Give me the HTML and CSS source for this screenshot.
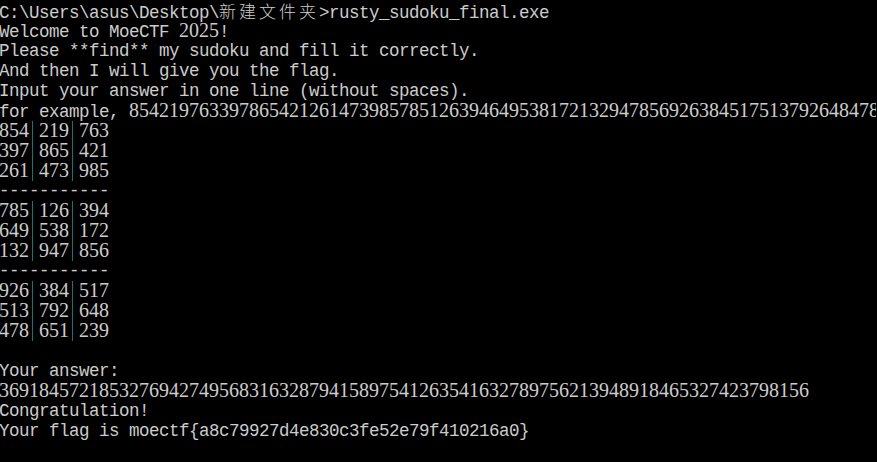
FILE: index.html
```html
<!DOCTYPE html>
<html>
<head>
<meta charset="utf-8">
<link rel="stylesheet" href="styles.css">
</head>
<body>
<div class="console">
  <div class="line">C:\Users\asus\Desktop\<span class="cjk">新建文件夹</span>&gt;rusty_sudoku_final.exe</div>
  <div class="line">Welcome to MoeCTF <span class="num">2025</span>!</div>
  <div class="line">Please **find** my sudoku and fill it correctly.</div>
  <div class="line">And then I will give you the flag.</div>
  <div class="line">Input your answer in one line (without spaces).</div>
  <div class="line">for example, <span class="num">854219763397865421261473985785126394649538172132947856926384517513792648478651239</span></div>
  <div class="line num">854<span class="sep"></span>219<span class="sep"></span>763</div>
  <div class="line num">397<span class="sep"></span>865<span class="sep"></span>421</div>
  <div class="line num">261<span class="sep"></span>473<span class="sep"></span>985</div>
  <div class="line">-----------</div>
  <div class="line num">785<span class="sep"></span>126<span class="sep"></span>394</div>
  <div class="line num">649<span class="sep"></span>538<span class="sep"></span>172</div>
  <div class="line num">132<span class="sep"></span>947<span class="sep"></span>856</div>
  <div class="line">-----------</div>
  <div class="line num">926<span class="sep"></span>384<span class="sep"></span>517</div>
  <div class="line num">513<span class="sep"></span>792<span class="sep"></span>648</div>
  <div class="line num">478<span class="sep"></span>651<span class="sep"></span>239</div>
  <div class="line"> </div>
  <div class="line">Your answer:</div>
  <div class="line num">369184572185327694274956831632879415897541263541632789756213948918465327423798156</div>
  <div class="line">Congratulation!</div>
  <div class="line">Your flag is moectf{a8c79927d4e830c3fe52e79f410216a0}</div>
  <div class="line"> </div>
  <div class="line">C:\Users\asus\Desktop\<span class="cjk">新建文件夹</span>&gt;</div>
</div>
</body>
</html>
```

FILE: styles.css
```css
html, body {
  margin: 0;
  padding: 0;
  background: #000000;
  overflow: hidden;
}

.console {
  width: 877px;
  height: 462px;
  overflow: hidden;
  margin-left: -1px;
  padding-top: 1px;
  font-family: "Liberation Mono", "DejaVu Sans Mono", monospace;
  font-size: 17.5px;
  letter-spacing: -0.5px;
  color: #cccccc;
}

.line {
  height: 20px;
  line-height: 20px;
  white-space: pre;
}

.num {
  font-family: "Liberation Serif", serif;
  font-size: 20px;
  letter-spacing: 0;
  line-height: 18px;
}

.cjk {
  font-family: "Noto Sans CJK SC", sans-serif;
  font-size: 17px;
  font-weight: 300;
  letter-spacing: 3px;
  line-height: 20px;
}

.sep {
  display: inline-block;
  position: relative;
  width: 10px;
  height: 20px;
  vertical-align: top;
}

.sep::before {
  content: "";
  position: absolute;
  left: 3px;
  top: 0;
  width: 1px;
  height: 20px;
  background: #157474;
}
```
